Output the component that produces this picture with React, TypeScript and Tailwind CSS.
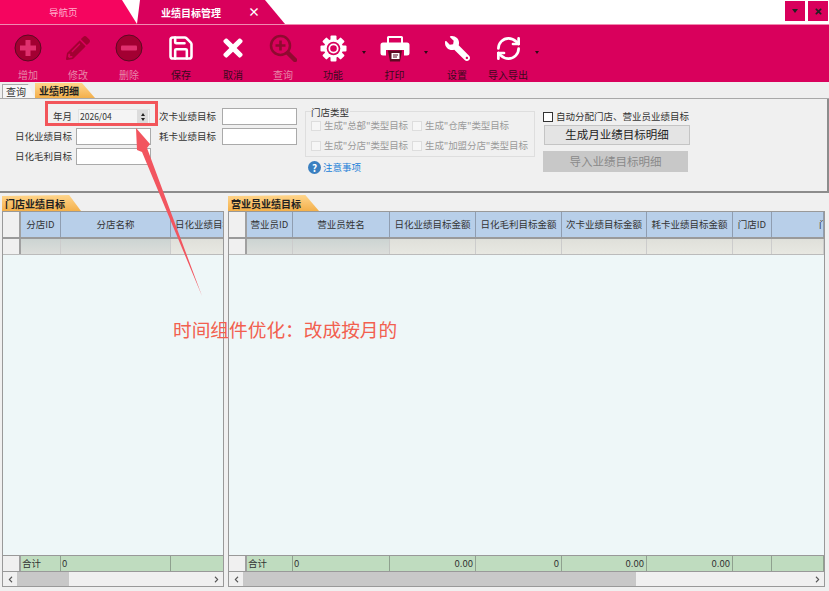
import React from "react";
import { FaPencilAlt, FaTimes, FaWrench, FaChevronLeft, FaChevronRight } from "react-icons/fa";
import { Save, RefreshCw } from "lucide-react";

function CircleIcon({ minus }: { minus?: boolean }) {
  return (
    <svg width="28" height="28" viewBox="0 0 28 28">
      <circle cx="14" cy="14" r="13" fill="#a30032" stroke="#5c0a22" strokeWidth="1" />
      {minus ? (
        <rect x="6" y="11.500" width="16" height="5" rx="1" fill="#e0306e" />
      ) : (
        <path d="M11.500 6h5v5.500H22v5h-5.500V22h-5v-5.500H6v-5h5.500z" fill="#e0306e" />
      )}
    </svg>
  );
}

function ZoomIcon() {
  return (
    <svg width="28" height="28" viewBox="0 0 28 28">
      <circle cx="11.500" cy="11.500" r="9.500" fill="none" stroke="#8f0a30" strokeWidth="2.500" />
      <path d="M6.500 11.500h10M11.500 6.500v10" stroke="#8f0a30" strokeWidth="2.600" />
      <path d="M19 19l7 7" stroke="#8f0a30" strokeWidth="4.500" strokeLinecap="round" />
    </svg>
  );
}

function GearIcon() {
  const angles = [0, 45, 90, 135, 180, 225, 270, 315];
  return (
    <svg width="27" height="27" viewBox="0 0 27 27">
      {angles.map((a) => (
        <rect key={a} x="10.500" y="0.500" width="6" height="6" rx="1" fill="white" transform={`rotate(${a} 13.500 13.500)`} />
      ))}
      <circle cx="13.500" cy="13.500" r="9.500" fill="white" />
      <circle cx="13.500" cy="13.500" r="6.800" fill="#d9005c" />
      <circle cx="13.500" cy="13.500" r="4.200" fill="none" stroke="white" strokeWidth="1.800" />
    </svg>
  );
}

function PrinterIcon() {
  return (
    <svg width="30" height="27" viewBox="0 0 30 27">
      <path d="M7 9V2.500A1.500 1.500 0 0 1 8.500 1h13A1.500 1.500 0 0 1 23 2.500V9h-2V3H9v6z" fill="white" />
      <path d="M3 7.500h24A2.500 2.500 0 0 1 29.500 10v8a2.500 2.500 0 0 1-2.500 2.500h-3V15H6v5.500H3A2.500 2.500 0 0 1 .500 18v-8A2.500 2.500 0 0 1 3 7.500z" fill="white" />
      <path d="M8 15.500h14l-2 11H10z" fill="#5c0a22" />
      <path d="M11.500 18h8v6h-8z" fill="white" />
      <path d="M13 20h5M13 22h4" stroke="#5c0a22" strokeWidth="1" />
    </svg>
  );
}

function Caret() {
  return (
    <div className="w-[9px] h-full flex flex-col items-center pt-[26px]">
      <div className="w-0 h-0 border-x-[2.500px] border-x-transparent border-t-[3px] border-t-[#2a0a15]" />
    </div>
  );
}

function Tool({ w, label, dim, children }: { w: string; label: string; dim?: boolean; children: React.ReactNode }) {
  return (
    <div className={`${w} flex flex-col items-center`}>
      <div className="h-[38px] mt-[4px] flex items-center justify-center">{children}</div>
      <div className={`mt-[2px] text-[10px] leading-[12px] whitespace-nowrap ${dim ? "text-[#e887a8]" : "text-[#3a0a1c]"}`}>{label}</div>
    </div>
  );
}

function Field({ label, wide }: { label: string; wide?: boolean }) {
  return (
    <>
      <div className={`text-[9.500px] text-[#333] text-right whitespace-nowrap ${wide ? "w-[72px]" : "w-[57px]"}`}>{label}</div>
      <div className="w-[75px] h-[17px] bg-white border border-[#aaa]" />
    </>
  );
}

function Check({ label, w }: { label: string; w: string }) {
  return (
    <div className={`${w} flex items-center`}>
      <div className="w-[10px] h-[10px] bg-[#f6f6f6] border border-[#ddd]" />
      <span className="ml-[3px] text-[9.500px] tracking-[-0.1px] text-[#9a9a9a] whitespace-nowrap">{label}</span>
    </div>
  );
}

type Col = { w: string; label: string; total?: string; right?: boolean; cls?: string };

function SectionTab({ label, w }: { label: string; w: string }) {
  return (
    <div className={`${w} h-[16px] pl-[3px] flex items-center text-[10px] font-bold text-[#222] whitespace-nowrap bg-gradient-to-b from-[#ffd58a] to-[#f3b04a] [clip-path:polygon(0_1px,85%_0,100%_100%,0_100%)]`}>
      {label}
    </div>
  );
}

function DataGrid({ cols, thumb, spacer }: { cols: Col[]; thumb: string; spacer: string }) {
  return (
    <div className="flex-1 min-h-0 flex flex-col border border-[#999] overflow-hidden">
      <div className="flex h-[27px] border-b-2 border-[#9a9a9a] shrink-0">
        <div className="w-[18px] shrink-0 bg-[#f0f0f0] border-r-2 border-[#a0a0a0]" />
        {cols.map((c, i) => (
          <div key={i} className={`${c.w} shrink-0 bg-[#b8cfe9] border-r border-[#8f9db0] flex items-center text-[9.500px] text-[#333] whitespace-nowrap overflow-hidden ${c.cls ?? "justify-center"}`}>
            {c.label}
          </div>
        ))}
      </div>
      <div className="flex h-[16px] border-b border-[#bbb] shrink-0">
        <div className="w-[18px] shrink-0 bg-[#f0f0f0] border-r-2 border-[#a0a0a0]" />
        {cols.map((c, i) => (
          <div key={i} className={`${c.w} shrink-0 border-r border-[#ccc] bg-gradient-to-b ${i < 2 ? "from-[#ccd4d2] to-[#dcdedb]" : "from-[#dfe0da] to-[#e8e8e2]"}`} />
        ))}
      </div>
      <div className="flex-1 bg-[#eef7f8]" />
      <div className="flex h-[17px] border-y border-[#999] shrink-0">
        <div className="w-[18px] shrink-0 bg-[#f0f0f0] border-r-2 border-[#a0a0a0]" />
        {cols.map((c, i) => (
          <div key={i} className={`${c.w} shrink-0 bg-[#bfdcbf] border-r border-[#8fa08f] flex items-center px-[1px] text-[9.500px] text-[#333] whitespace-nowrap ${c.right ? "justify-end pr-[2px]" : ""}`}>
            {c.total}
          </div>
        ))}
      </div>
      <div className="flex h-[14px] bg-[#f0f0f0] items-center shrink-0">
        <div className="w-[14px] flex justify-center text-[#555]"><FaChevronLeft size={7} /></div>
        <div className={`${thumb} h-full bg-[#c8c8c8]`} />
        <div className={spacer} />
        <div className="w-[14px] flex justify-center text-[#555]"><FaChevronRight size={7} /></div>
      </div>
    </div>
  );
}

const leftCols: Col[] = [
  { w: "w-[40px]", label: "分店ID", total: "合计" },
  { w: "w-[110px]", label: "分店名称", total: "0" },
  { w: "w-[53px]", label: "日化业绩目标", cls: "pl-[4px]" },
];

const rightCols: Col[] = [
  { w: "w-[46px]", label: "营业员ID", total: "合计" },
  { w: "w-[97px]", label: "营业员姓名", total: "0" },
  { w: "w-[86px]", label: "日化业绩目标金额", total: "0.00", right: true },
  { w: "w-[86px]", label: "日化毛利目标金额", total: "0", right: true },
  { w: "w-[85px]", label: "次卡业绩目标金额", total: "0.00", right: true },
  { w: "w-[86px]", label: "耗卡业绩目标金额", total: "0.00", right: true },
  { w: "w-[39px]", label: "门店ID" },
  { w: "w-[52px]", label: "门店名称", cls: "pl-[47px]" },
];

export default function App() {
  return (
    <div className="relative w-[829px] h-[591px] overflow-hidden bg-[#f0f0f0] flex flex-col font-['Noto_Sans_CJK_SC','Liberation_Sans',sans-serif]">
      {/* title tabs */}
      <div className="h-[24px] bg-white flex items-stretch shrink-0">
        <div className="w-[137px] bg-[#f5055f] flex items-center pl-[49px] text-[9.500px] text-[#ffb0cc] [clip-path:polygon(0_0,122px_0,137px_100%,0_100%)]">
          导航页
        </div>
        <div className="w-[148px] bg-[#d9005c] text-white flex items-center [clip-path:polygon(3px_0,128px_0,148px_100%,0_100%)]">
          <span className="ml-[24px] text-[10px] font-bold whitespace-nowrap">业绩目标管理</span>
          <span className="ml-[27px] text-[12px] font-bold leading-none">×</span>
        </div>
        <div className="flex-1" />
        <div className="w-[20px] h-[20px] mt-[1px] bg-[#d9005c] flex items-center justify-center">
          <div className="w-0 h-0 border-x-[3px] border-x-transparent border-t-[4px] border-t-[#222]" />
        </div>
        <div className="w-[20px] h-[20px] mt-[1px] mr-[1px] ml-[3px] bg-[#d9005c] flex items-center justify-center">
          <FaTimes className="text-[#222]" size={9} />
        </div>
      </div>

      {/* toolbar */}
      <div className="h-[58px] bg-[#d9005c] border-t border-[#f08ab0] flex pl-[3px] shrink-0">
        <Tool w="w-[50px]" label="增加" dim><CircleIcon /></Tool>
        <Tool w="w-[50px]" label="修改" dim><FaPencilAlt className="text-[#a30032]" size={24} /></Tool>
        <Tool w="w-[52px]" label="删除" dim><CircleIcon minus /></Tool>
        <Tool w="w-[52px]" label="保存"><Save className="text-white" size={28} strokeWidth={2.200} /></Tool>
        <Tool w="w-[52px]" label="取消"><FaTimes className="text-white" size={28} /></Tool>
        <Tool w="w-[48px]" label="查询" dim><ZoomIcon /></Tool>
        <Tool w="w-[52px]" label="功能"><GearIcon /></Tool>
        <Caret />
        <Tool w="w-[53px]" label="打印"><PrinterIcon /></Tool>
        <Caret />
        <Tool w="w-[54px]" label="设置"><FaWrench className="text-white -scale-x-100" size={25} /></Tool>
        <Tool w="w-[48px]" label="导入导出"><RefreshCw className="text-white" size={27} strokeWidth={2.400} /></Tool>
        <Caret />
      </div>

      {/* page tabs */}
      <div className="h-[17px] bg-[#efefef] border-b border-[#a8a8a8] flex pl-[2px] items-end shrink-0">
        <div className="w-[33px] h-[14px] bg-[#f6f6f6] border-t border-l border-[#aaa] flex items-center pl-[3px] text-[10px] text-[#333] [clip-path:polygon(0_0,26px_0,33px_100%,0_100%)]">查询</div>
        <div className="w-[60px] h-[15px] pl-[4px] flex items-center text-[10px] font-bold text-[#222] bg-gradient-to-b from-[#ffd58a] to-[#f3b04a] [clip-path:polygon(0_0,47px_0,60px_100%,0_100%)]">业绩明细</div>
      </div>

      {/* form panel */}
      <div className="h-[94px] border-b-2 border-r-2 border-[#8c8c8c] flex pt-[9px] shrink-0">
        <div className="w-[305px] shrink-0 flex flex-col gap-[3px]">
          <div className="h-[17px] flex items-center gap-[4px]">
            <div className="w-[72px] text-[9.500px] text-[#333] text-right">年月</div>
            <div className="w-[72px] ml-[2px] h-[16px] bg-[#f4f4f4] border border-[#e2e2e2] flex items-center justify-between pl-[1px] pr-[1px] text-[8.500px] text-[#333]">
              2026/04
              <div className="w-[11px] h-[13px] bg-[#dcdcdc] flex flex-col items-center justify-center gap-[2px]">
                <div className="w-0 h-0 border-x-[2.500px] border-x-transparent border-b-[3px] border-b-[#222]" />
                <div className="w-0 h-0 border-x-[2.500px] border-x-transparent border-t-[3px] border-t-[#222]" />
              </div>
            </div>
            <div className="w-[1px]" />
            <div className="w-[57px] text-[9.500px] text-[#333] text-right whitespace-nowrap">次卡业绩目标</div>
            <div className="ml-[2px] w-[75px] h-[17px] bg-white border border-[#aaa]" />
          </div>
          <div className="h-[17px] flex items-center gap-[4px]">
            <Field label="日化业绩目标" wide />
            <div className="w-0" />
            <div className="text-[9.500px] text-[#333] w-[57px] text-right whitespace-nowrap">耗卡业绩目标</div>
            <div className="ml-[2px] w-[75px] h-[17px] bg-white border border-[#aaa]" />
          </div>
          <div className="h-[17px] flex items-center gap-[4px]">
            <Field label="日化毛利目标" wide />
          </div>
        </div>

        <div className="w-[230px] shrink-0">
          <div className="relative mt-[3px] h-[46px] border border-[#dedede] flex flex-col pt-[6px] pl-[5px] gap-[9px]">
            <div className="absolute -top-[5px] left-[5px] bg-[#f0f0f0] text-[9.500px] leading-[11px] text-[#333] pr-[1px]">门店类型</div>
            <div className="flex h-[11px] mt-[2px]">
              <Check w="w-[101px]" label={'生成"总部"类型目标'} />
              <Check w="w-[120px]" label={'生成"仓库"类型目标'} />
            </div>
            <div className="flex h-[11px]">
              <Check w="w-[101px]" label={'生成"分店"类型目标'} />
              <Check w="w-[120px]" label={'生成"加盟分店"类型目标'} />
            </div>
          </div>
          <div className="mt-[3px] pl-[3px] flex items-center">
            <div className="w-[13px] h-[13px] rounded-full bg-[#3a7fc0] text-white text-[10px] font-bold leading-[13px] text-center">?</div>
            <span className="ml-[2px] text-[9.500px] text-[#1a80d8]">注意事项</span>
          </div>
        </div>

        <div className="ml-[8px] w-[147px] shrink-0 flex flex-col">
          <div className="h-[15px] mt-[1px] flex items-center">
            <div className="w-[10px] h-[10px] bg-white border border-[#333]" />
            <span className="ml-[3px] text-[9.500px] text-[#333] whitespace-nowrap">自动分配门店、营业员业绩目标</span>
          </div>
          <div className="mt-[1px] ml-[1px] w-[146px] h-[20px] bg-[#e4e4e4] border border-[#c4c4c4] flex items-center justify-center text-[11.500px] text-[#222] whitespace-nowrap">生成月业绩目标明细</div>
          <div className="mt-[6px] w-[145px] h-[21px] bg-[#c8c8c8] flex items-center justify-center text-[11.500px] text-[#8a8a8a] whitespace-nowrap">导入业绩目标明细</div>
        </div>
      </div>

      {/* grids */}
      <div className="flex-1 min-h-0 flex pt-[2px] pb-[4px] pl-[2px] pr-[4px] gap-[4px]">
        <div className="w-[222px] shrink-0 flex flex-col">
          <SectionTab label="门店业绩目标" w="w-[79px]" />
          <DataGrid cols={leftCols} thumb="w-[52px]" spacer="flex-1" />
        </div>
        <div className="flex-1 min-w-0 flex flex-col">
          <SectionTab label="营业员业绩目标" w="w-[91px]" />
          <DataGrid cols={rightCols} thumb="w-[393px]" spacer="flex-1" />
        </div>
      </div>

      {/* annotation */}
      <div className="absolute left-[45px] top-[101px] w-[113px] h-[25px] border-[3px] border-[#f2555a]" />
      <svg className="absolute left-0 top-0 pointer-events-none" width="829" height="591">
        <path d="M136 128 L150 144 L147 148 L202 296 L142 152 L137 150 Z" fill="#f2555f" />
      </svg>
      <div className="absolute left-[173px] top-[315px] text-[18.700px] leading-[28px] text-[#f2604f] whitespace-nowrap">时间组件优化：改成按月的</div>
    </div>
  );
}
